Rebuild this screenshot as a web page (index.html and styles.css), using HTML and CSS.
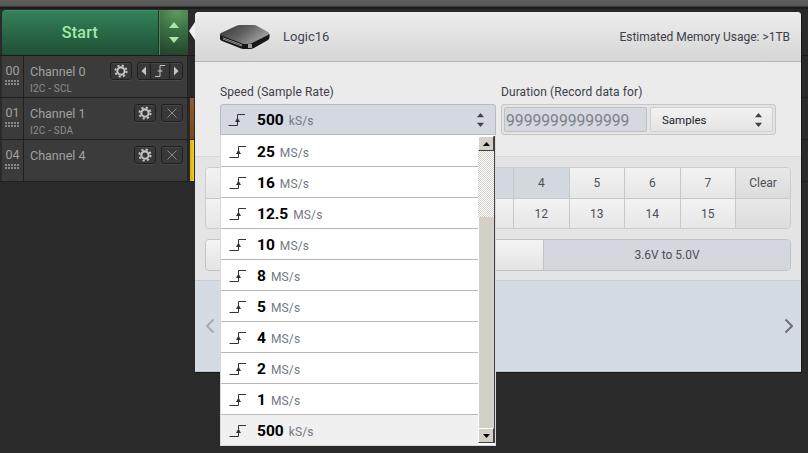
FILE: index.html
```html
<!DOCTYPE html>
<html lang="en">
<head>
<meta charset="utf-8">
<title>Logic16</title>
<link rel="stylesheet" href="styles.css">
</head>
<body>
<svg class="defs" width="0" height="0" aria-hidden="true">
  <defs>
    <symbol id="step" viewBox="0 0 18 14">
      <path d="M0.5 12.5H9.5V1.5H17" fill="none" stroke="#333" stroke-width="1"/>
      <path d="M9.5 4.5L12 9H7Z" fill="#333"/>
    </symbol>
    <symbol id="gear" viewBox="0 0 16 16">
      <circle cx="8" cy="8" r="4.2" fill="none" stroke="#c4c4c4" stroke-width="2.4"/>
      <circle cx="8" cy="8" r="6.4" fill="none" stroke="#c4c4c4" stroke-width="2.2" stroke-dasharray="2.5 2.53"/>
    </symbol>
    <symbol id="cross" viewBox="0 0 12 12">
      <path d="M1.5 1.5L10.5 10.5M10.5 1.5L1.5 10.5" stroke="#8c8c8c" stroke-width="1" fill="none"/>
    </symbol>
    <symbol id="updown" viewBox="0 0 10 18">
      <path d="M5 1L9 6H1Z M1 12H9L5 17Z" fill="#444"/>
    </symbol>
  </defs>
</svg>

<div class="topbar"></div>

<div class="lane lane-start">
  <div class="start-group">
    <div class="start-btn">Start</div>
    <div class="start-arrows">
      <svg width="14" height="26" viewBox="0 0 14 26"><path d="M7 2L12 8H2Z" fill="#a9e6a9"/><path d="M2 17H12L7 23Z" fill="#a9e6a9"/></svg>
    </div>
  </div>
</div>

<div class="lane">
  <div class="channel">
    <div class="chan-num"><span>00</span><i class="dots"></i></div>
    <div class="chan-info">
      <div class="chan-top">
        <span class="chan-name">Channel 0</span>
        <button class="icon-btn"><svg class="gear"><use href="#gear"/></svg></button>
        <div class="nav-group">
          <span class="nav-cell nav-side"><svg width="6" height="10" viewBox="0 0 6 10"><path d="M5 0.5V9.5L0.5 5Z" fill="#c4c4c4"/></svg></span>
          <span class="nav-cell nav-mid"><svg width="10" height="12" viewBox="0 0 10 12"><path d="M0 11.5H5L5 0.5H10M2.5 6H7.5" fill="none" stroke="#c4c4c4"/></svg></span>
          <span class="nav-cell nav-side"><svg width="6" height="10" viewBox="0 0 6 10"><path d="M1 0.5V9.5L5.5 5Z" fill="#c4c4c4"/></svg></span>
        </div>
      </div>
      <div class="chan-sub">I2C - SCL</div>
    </div>
  </div>
  <div class="track track-dark"></div>
</div>

<div class="lane">
  <div class="channel">
    <div class="chan-num"><span>01</span><i class="dots"></i></div>
    <div class="chan-info">
      <div class="chan-top">
        <span class="chan-name">Channel 1</span>
        <button class="icon-btn"><svg class="gear"><use href="#gear"/></svg></button>
        <button class="icon-btn close-btn"><svg class="cross"><use href="#cross"/></svg></button>
      </div>
      <div class="chan-sub">I2C - SDA</div>
    </div>
  </div>
  <div class="track track-brown"></div>
</div>

<div class="lane">
  <div class="channel">
    <div class="chan-num"><span>04</span><i class="dots"></i></div>
    <div class="chan-info">
      <div class="chan-top">
        <span class="chan-name">Channel 4</span>
        <button class="icon-btn"><svg class="gear"><use href="#gear"/></svg></button>
        <button class="icon-btn close-btn"><svg class="cross"><use href="#cross"/></svg></button>
      </div>
    </div>
  </div>
  <div class="track track-yellow"></div>
</div>

<section class="popover">
  <span class="pointer"></span>
  <header class="pop-head">
    <svg class="device" width="52" height="26" viewBox="0 0 52 26">
      <defs>
        <linearGradient id="devtop" x1="0" y1="0" x2="1" y2="0.5">
          <stop offset="0" stop-color="#333"/>
          <stop offset="0.55" stop-color="#636363"/>
          <stop offset="1" stop-color="#a0a0a0"/>
        </linearGradient>
      </defs>
      <path d="M1 10V15Q1 16 3 17L22 24.500Q24 25 27 25H31Q33 25 35 24L49 16Q50.500 15 50.500 13V10Z" fill="#171717"/>
      <path d="M4 13.500L23 20.500V22.500L4 15.500Z" fill="#c8c8c8"/>
      <path d="M4 15L23 22V21L4 14Z" fill="#444"/>
      <path d="M29 20H33V24H29Z" fill="#9a9a9a"/>
      <path d="M1 11Q0.500 10 2 9L17 2Q19 1 21 1H35Q37 1 38 2L49 8Q51 9.500 49 11L33 19Q31 20 28 20H26Q24 20 22 19Z" fill="url(#devtop)"/>
    </svg>
    <span class="dev-name">Logic16</span>
    <span class="mem">Estimated Memory Usage: &gt;1TB</span>
  </header>

  <div class="settings">
    <div class="field field-speed">
      <label class="field-label">Speed (Sample Rate)</label>
      <div class="speed-select">
        <svg class="step"><use href="#step"/></svg>
        <b class="num">500</b><span class="unit">kS/s</span>
        <svg class="updown"><use href="#updown"/></svg>
      </div>
    </div>
    <div class="field">
      <label class="field-label">Duration (Record data for)</label>
      <div class="duration">
        <span class="dur-input">99999999999999</span>
        <span class="dur-select">Samples<svg class="updown"><use href="#updown"/></svg></span>
      </div>
    </div>
  </div>

  <div class="channels-area">
    <div class="chan-grid">
      <span class="cell"></span>
      <span class="cell"></span><span class="cell"></span><span class="cell"></span><span class="cell cell-on"></span>
      <span class="cell cell-on">4</span><span class="cell">5</span><span class="cell">6</span><span class="cell">7</span>
      <span class="cell cell-clear">Clear</span>
      <span class="cell"></span>
      <span class="cell"></span><span class="cell"></span><span class="cell"></span><span class="cell"></span>
      <span class="cell">12</span><span class="cell">13</span><span class="cell">14</span><span class="cell">15</span>
      <span class="cell cell-clear"></span>
    </div>
    <div class="voltage">
      <span class="volt volt-low"></span>
      <span class="volt volt-high">3.6V to 5.0V</span>
    </div>
  </div>

  <div class="carousel">
    <svg width="10" height="16" viewBox="0 0 10 16"><path d="M8.500 1.500L2 8L8.500 14.500" fill="none" stroke="#a3acb8" stroke-width="2"/></svg>
    <svg width="10" height="16" viewBox="0 0 10 16"><path d="M1.500 1.500L8 8L1.500 14.500" fill="none" stroke="#6c7078" stroke-width="2"/></svg>
  </div>
</section>

<div class="dropdown">
  <ul class="options">
    <li><svg class="step"><use href="#step"/></svg><b class="num">25</b><span class="unit">MS/s</span></li>
    <li><svg class="step"><use href="#step"/></svg><b class="num">16</b><span class="unit">MS/s</span></li>
    <li><svg class="step"><use href="#step"/></svg><b class="num">12.5</b><span class="unit">MS/s</span></li>
    <li><svg class="step"><use href="#step"/></svg><b class="num">10</b><span class="unit">MS/s</span></li>
    <li><svg class="step"><use href="#step"/></svg><b class="num">8</b><span class="unit">MS/s</span></li>
    <li><svg class="step"><use href="#step"/></svg><b class="num">5</b><span class="unit">MS/s</span></li>
    <li><svg class="step"><use href="#step"/></svg><b class="num">4</b><span class="unit">MS/s</span></li>
    <li><svg class="step"><use href="#step"/></svg><b class="num">2</b><span class="unit">MS/s</span></li>
    <li><svg class="step"><use href="#step"/></svg><b class="num">1</b><span class="unit">MS/s</span></li>
    <li class="selected"><svg class="step"><use href="#step"/></svg><b class="num">500</b><span class="unit">kS/s</span></li>
  </ul>
  <div class="scrollbar">
    <span class="sb-btn"><svg width="7" height="4" viewBox="0 0 7 4"><path d="M3.500 0L7 4H0Z" fill="#000"/></svg></span>
    <span class="sb-track"></span>
    <span class="sb-thumb"></span>
    <span class="sb-btn"><svg width="7" height="4" viewBox="0 0 7 4"><path d="M0 0H7L3.500 4Z" fill="#000"/></svg></span>
  </div>
</div>
</body>
</html>
```
FILE: styles.css
```css
* { box-sizing: border-box; }
html, body { margin: 0; padding: 0; }
body {
  width: 808px;
  height: 453px;
  overflow: hidden;
  position: relative;
  background: #2a2a2a;
  font-family: Roboto, "Liberation Sans", sans-serif;
  font-size: 12px;
  color: #3c4048;
}
.defs { position: absolute; }

.topbar {
  height: 9px;
  background: linear-gradient(#5e5e5e 0, #575757 6px, #3a3a3a 6px, #3a3a3a 7px, #1c1c1c 7px);
}

.lane { display: flex; height: 42px; border-bottom: 1px solid #1f1f1f; padding-left: 2px; }
.lane-start { height: 47px; padding-top: 1px; border-bottom-color: #1a1a1a; }

.start-group { width: 186px; display: flex; }
.start-btn {
  width: 157px;
  display: flex;
  align-items: center;
  justify-content: center;
  padding-bottom: 2px;
  font-size: 16px;
  font-weight: 500;
  letter-spacing: 0.3px;
  color: #a6e8a6;
  background: linear-gradient(#33805a 0, #2a6a48 45%, #1f4f35 100%);
  border-radius: 4px 0 0 0;
  border-right: 1px solid #163524;
  border-top: 1px solid #4a8f68;
}
.start-arrows {
  flex: 1;
  display: flex;
  align-items: center;
  justify-content: center;
  background: radial-gradient(circle at 60% 0, #5f9c62 0, #3a6f42 45%, #23402a 100%);
  border-left: 1px solid #4f8a58;
}

.channel {
  width: 186px;
  display: flex;
  background: #3b3b3b;
  border-right: 1px solid #222;
}
.chan-num {
  width: 22px;
  border-right: 1px solid #1f1f1f;
  display: flex;
  flex-direction: column;
  align-items: center;
  padding-top: 7px;
  font-size: 12.500px;
  line-height: 15px;
  color: #a0a0a0;
}
.dots {
  width: 15px;
  height: 6px;
  margin-top: 2px;
  background-image: radial-gradient(circle at 1px 1px, #888 0.8px, transparent 1px);
  background-size: 3px 3px;
}
.chan-info { flex: 1; padding: 6px 4px 0 6px; display: flex; flex-direction: column; }
.chan-top { display: flex; align-items: center; gap: 5px; height: 18px; }
.chan-name { flex: 1; font-size: 12.500px; color: #a2a2a2; }
.chan-sub { font-size: 10px; color: #8e8e8e; margin-top: 3px; line-height: 12px; letter-spacing: 0.2px; }

.icon-btn {
  width: 22px;
  height: 18px;
  padding: 0;
  display: flex;
  align-items: center;
  justify-content: center;
  background: #383838;
  border: 1px solid #202020;
  border-radius: 3px;
  box-shadow: inset 0 1px 0 #444, 0 1px 0 #474747;
}
.gear { width: 14px; height: 14px; }
.cross { width: 12px; height: 12px; }

.nav-group {
  width: 46px;
  height: 18px;
  display: flex;
  border: 1px solid #202020;
  border-radius: 3px;
  background: #383838;
  box-shadow: inset 0 1px 0 #444, 0 1px 0 #474747;
}
.nav-cell { display: flex; align-items: center; justify-content: center; }
.nav-side { width: 12px; }
.nav-mid { flex: 1; border-left: 1px solid #202020; border-right: 1px solid #202020; }

.track { width: 4px; margin-left: 2px; }
.track-dark { background: #282828; }
.track-brown { background: linear-gradient(#8d5e35, #7a4818); }
.track-yellow { background: linear-gradient(90deg, #d8b010, #f0d020); }

.popover {
  position: absolute;
  left: 195px;
  top: 12px;
  width: 606px;
  height: 360px;
  display: flex;
  flex-direction: column;
  background: #ebebeb;
  border-radius: 4px 4px 0 0;
  box-shadow: 1px 1px 0 #151515;
}
.pointer {
  position: absolute;
  left: -6px;
  top: 10px;
  width: 0;
  height: 0;
  border-top: 9px solid transparent;
  border-bottom: 9px solid transparent;
  border-right: 6px solid #f0f0f0;
}
.pop-head {
  height: 50px;
  display: flex;
  align-items: center;
  padding: 0 11px 0 24px;
  background: linear-gradient(#ededed, #d6d6d6);
  border-bottom: 1px solid #b4b4b4;
  border-radius: 4px 4px 0 0;
}
.device { flex: none; }
.dev-name { margin-left: 12px; font-size: 13px; color: #3e4552; flex: 1; }
.mem { font-size: 12px; color: #3c4048; letter-spacing: -0.02px; }

.settings {
  height: 95px;
  display: flex;
  gap: 5px;
  padding: 23px 0 0 25px;
  border-bottom: 1px solid #d8d8d8;
}
.field-speed { width: 276px; }
.field-label { display: block; height: 19px; font-size: 12px; line-height: 15px; letter-spacing: 0.1px; color: #3c4048; }
.speed-select {
  height: 31px;
  display: flex;
  align-items: center;
  padding: 1px 10px 0 7px;
  background: #d4d8e0;
  border: 1px solid #b6bac2;
  border-radius: 3px 3px 0 0;
}
.step { width: 18px; height: 14px; flex: none; margin-right: 11px; }
.num { font-size: 15.500px; font-weight: 700; color: #000; }
.unit { font-size: 12px; color: #737884; margin-left: 5px; letter-spacing: 0.15px; position: relative; top: 1px; }
.updown { width: 9px; height: 16px; margin-left: auto; }

.duration {
  width: 275px;
  height: 31px;
  display: flex;
  gap: 3px;
  padding: 2px;
  background: #e4e4e4;
  border: 1px solid #c6c6c6;
  border-radius: 3px;
}
.dur-input {
  width: 143px;
  display: flex;
  align-items: center;
  padding: 2px 0 0 1px;
  font-size: 15.700px;
  color: #7c8088;
  background: #d5d8de;
  border: 1px solid #c0c0c0;
  border-radius: 2px;
  overflow: hidden;
}
.dur-select {
  flex: 1;
  display: flex;
  align-items: center;
  padding: 1px 9px 0 11px;
  font-size: 11.500px;
  color: #20242c;
  background: linear-gradient(#f2f2f2, #e4e4e4);
  border: 1px solid #cfcfcf;
  border-radius: 2px;
}

.channels-area {
  flex: 1;
  background: #e4e4e4;
  padding: 10px 10px 0;
  border-bottom: 1px solid #c6ccd4;
}
.chan-grid {
  height: 62px;
  display: grid;
  grid-template-columns: 86px repeat(8, 55.5px) 1fr;
  grid-template-rows: 31px 30px;
  border: 1px solid #cdcdcd;
  border-radius: 4px;
  overflow: hidden;
}
.cell {
  display: flex;
  align-items: center;
  justify-content: center;
  color: #4c4f56;
  background: linear-gradient(#f3f3f3, #e6e6e6);
  border-right: 1px solid #c8c8c8;
  border-bottom: 1px solid #c8c8c8;
}
.cell-on { background: #d3d7de; }
.cell-clear { background: linear-gradient(#e8e8e8, #dcdcdc); border-right: 0; }

.voltage {
  margin-top: 10px;
  height: 32px;
  display: flex;
  border: 1px solid #bfc3ca;
  border-radius: 4px;
  overflow: hidden;
}
.volt { display: flex; align-items: center; justify-content: center; color: #4c4f56; }
.volt-low { width: 337px; background: linear-gradient(#f4f4f4, #e4e4e4); }
.volt-high { flex: 1; background: #d4d7dd; border-left: 1px solid #bfc3ca; }

.carousel {
  height: 91px;
  flex: none;
  display: flex;
  align-items: center;
  justify-content: space-between;
  padding: 0 7px 0 10px;
  background: #d5dbe3;
  border-bottom: 1px solid #c0c5cc;
}

.dropdown {
  position: absolute;
  left: 220px;
  top: 135px;
  width: 276px;
  height: 311px;
  display: flex;
  background: #fff;
  border: 1px solid #d8d8d8;
  border-top: 0;
  padding-bottom: 2px;
}
.options { list-style: none; margin: 0; padding: 0; flex: 1; }
.options li {
  height: 31px;
  display: flex;
  align-items: center;
  padding: 2px 0 0 8px;
  border-bottom: 1px solid #b9b9b9;
  background: #fff;
}
.options li:first-child { height: 32px; }
.options li.selected { height: 30px; background: #f0f0f0; border-bottom: 0; }
.options .step { margin-right: 10px; }

.scrollbar {
  width: 17px;
  display: flex;
  flex-direction: column;
  border-right: 1px solid #404040;
  margin-top: 1px;
}
.sb-btn {
  height: 15px;
  flex: none;
  display: flex;
  align-items: center;
  justify-content: center;
  background: #d4d0c8;
  border: 1px solid;
  border-color: #fff #404040 #404040 #fff;
}
.sb-track {
  height: 66px;
  flex: none;
  background-color: #fff;
  background-image: conic-gradient(#d4d0c8 25%, #fff 0 50%, #d4d0c8 0 75%, #fff 0);
  background-size: 2px 2px;
}
.sb-thumb {
  flex: 1;
  background: #d4d0c8;
  border-left: 1px solid #fff;
}
```
